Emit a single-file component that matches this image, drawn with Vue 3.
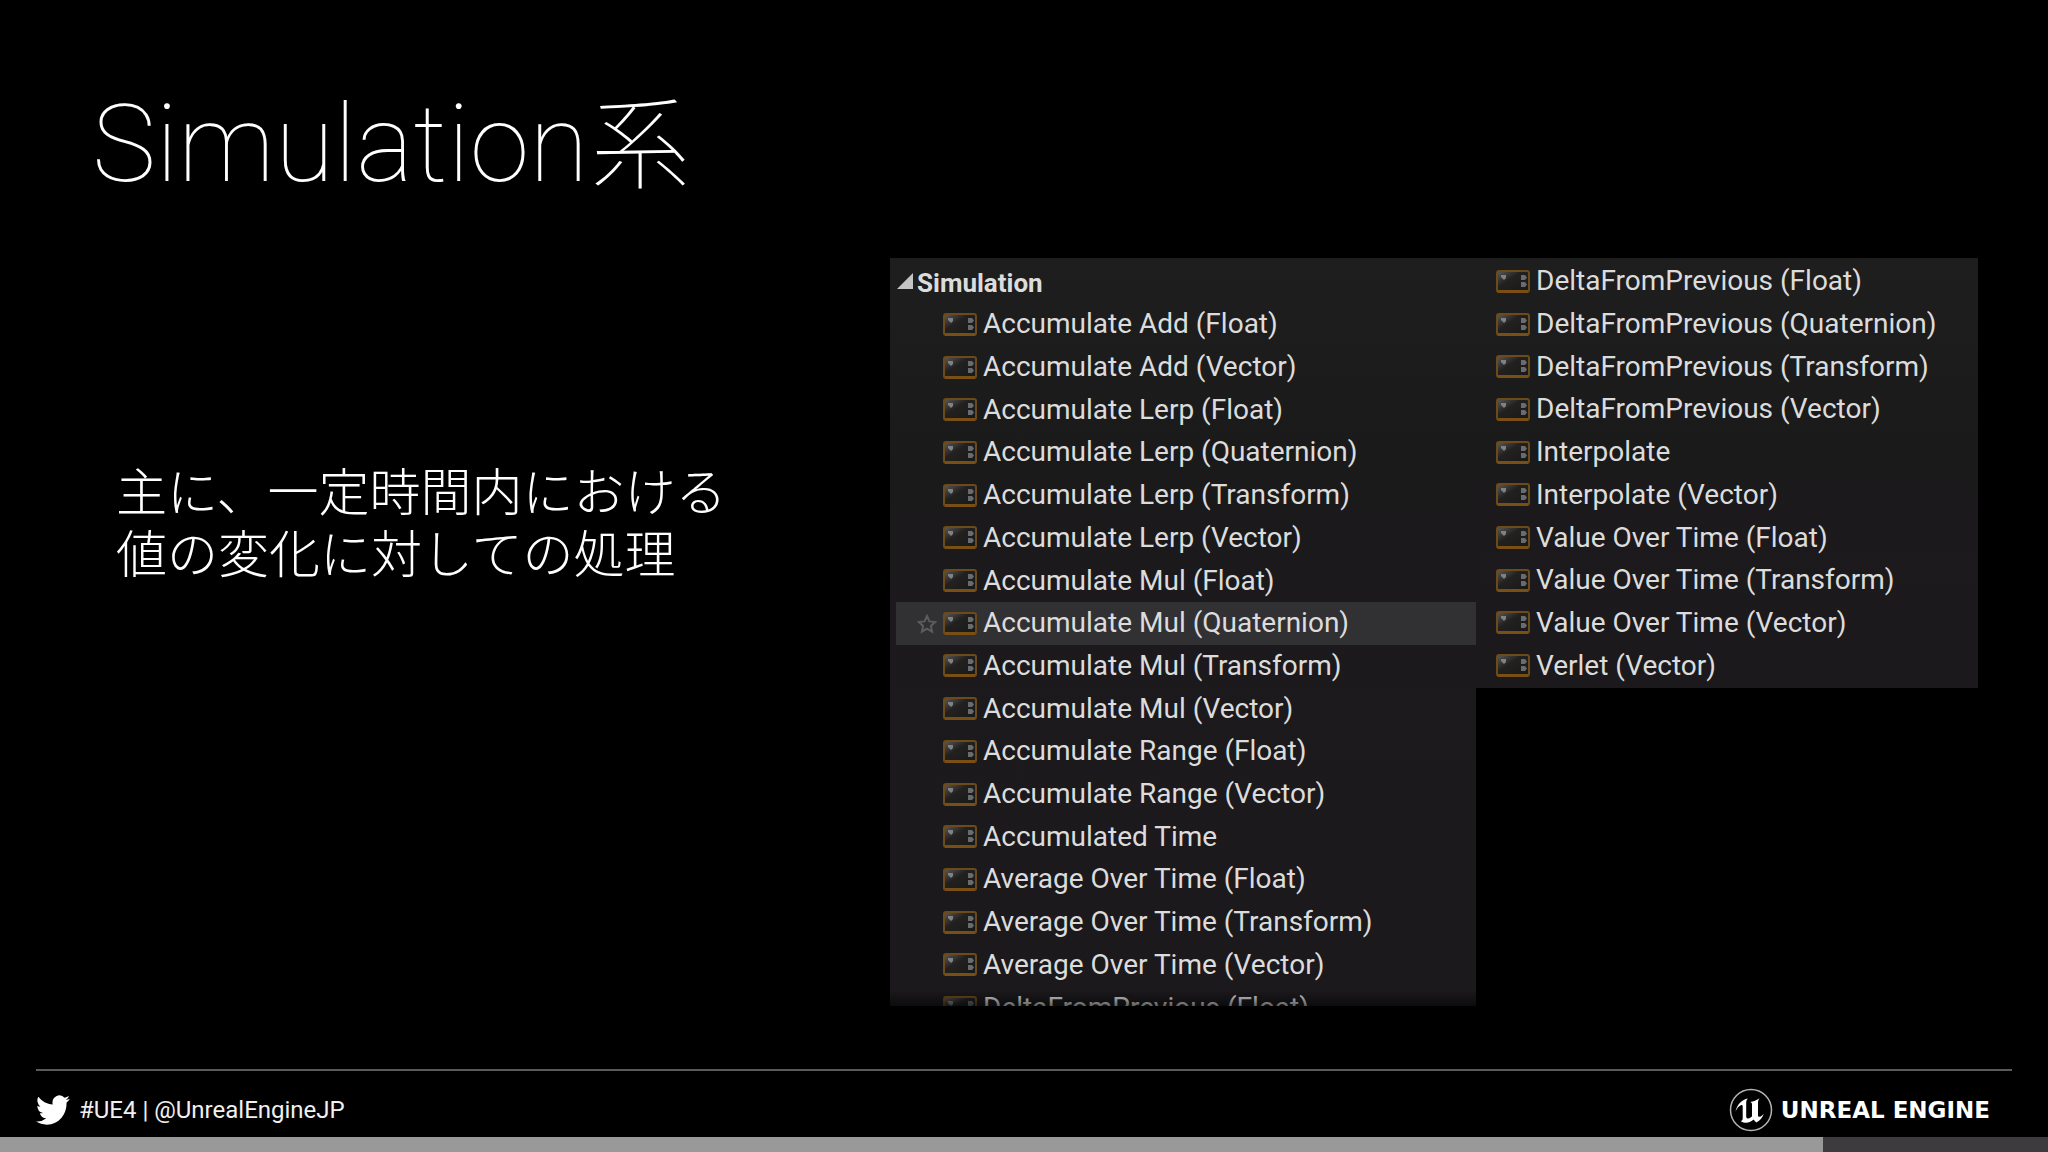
<script setup>
const leftNodes = [
  'Accumulate Add (Float)',
  'Accumulate Add (Vector)',
  'Accumulate Lerp (Float)',
  'Accumulate Lerp (Quaternion)',
  'Accumulate Lerp (Transform)',
  'Accumulate Lerp (Vector)',
  'Accumulate Mul (Float)',
  'Accumulate Mul (Quaternion)',
  'Accumulate Mul (Transform)',
  'Accumulate Mul (Vector)',
  'Accumulate Range (Float)',
  'Accumulate Range (Vector)',
  'Accumulated Time',
  'Average Over Time (Float)',
  'Average Over Time (Transform)',
  'Average Over Time (Vector)',
  'DeltaFromPrevious (Float)',
]
const rightNodes = [
  'DeltaFromPrevious (Float)',
  'DeltaFromPrevious (Quaternion)',
  'DeltaFromPrevious (Transform)',
  'DeltaFromPrevious (Vector)',
  'Interpolate',
  'Interpolate (Vector)',
  'Value Over Time (Float)',
  'Value Over Time (Transform)',
  'Value Over Time (Vector)',
  'Verlet (Vector)',
]
const columns = [
  { name: 'primary', heading: 'Simulation', nodes: leftNodes },
  { name: 'secondary', heading: '', nodes: rightNodes },
]
const selected = 'Accumulate Mul (Quaternion)'
const progress = 89
</script>

<template>
  <main class="slide">
    <svg width="0" height="0" class="defs" aria-hidden="true">
      <defs>
        <linearGradient id="nodeFill" x1="0" y1="0" x2="1" y2="1">
          <stop offset="0" stop-color="#5e5b57" />
          <stop offset="0.4" stop-color="#222120" />
          <stop offset="1" stop-color="#181818" />
        </linearGradient>
        <symbol id="node" viewBox="0 0 34 23">
          <rect x="1" y="1" width="32" height="21" rx="2" fill="url(#nodeFill)" stroke="#6b4a1c" stroke-width="2" />
          <path d="M2 21.500h30" stroke="#7a4f14" stroke-width="3" />
          <path d="M5 5h5v3l-2 2-3-3z" fill="#7c8288" />
          <path d="M25 5h4l2 2.500-2 2.500h-4zM25 12h4l2 2.500-2 2.500h-4z" fill="#686c71" />
        </symbol>
      </defs>
    </svg>

    <h1>Simulation<span class="kanji">系</span></h1>

    <section class="content">
      <p class="summary">主に、一定時間内における<br />値の変化に対しての処理</p>

      <div v-for="c in columns" :key="c.name" class="panel" :class="c.name">
        <h2 v-if="c.heading">
          <svg width="16" height="16" viewBox="0 0 16 16" aria-hidden="true"><path d="M16 0v16H0z" fill="#c4c4c4" /></svg>
          {{ c.heading }}
        </h2>
        <div class="clip">
          <ul>
            <li v-for="n in c.nodes" :key="n" :class="{ active: n === selected }">
              <svg v-if="n === selected" class="star" width="20" height="20" viewBox="0 0 20 20" aria-hidden="true">
                <path d="M10 2l2.400 5.400 5.800.6-4.300 3.900 1.200 5.800-5.100-3-5.100 3 1.200-5.800L1.800 8l5.800-.6z" fill="none" stroke="#5c5c5c" stroke-width="2" />
              </svg>
              <svg class="icon" width="34" height="23" aria-hidden="true"><use href="#node" /></svg>
              <span>{{ n }}</span>
            </li>
          </ul>
        </div>
      </div>
    </section>

    <footer>
      <div class="social">
        <svg width="34" height="30" viewBox="0 2 24 20" preserveAspectRatio="none" aria-hidden="true">
          <path fill="#fff" d="M23.950 4.570a10 10 0 0 1-2.820.77 4.960 4.960 0 0 0 2.160-2.720c-.95.55-2 .95-3.130 1.180a4.920 4.920 0 0 0-8.380 4.480C7.690 8.090 4.070 6.130 1.640 3.160a4.920 4.920 0 0 0 1.520 6.570 4.900 4.900 0 0 1-2.230-.61v.06a4.920 4.920 0 0 0 3.950 4.830 5 5 0 0 1-2.210.08 4.940 4.940 0 0 0 4.600 3.420A9.870 9.870 0 0 1 0 19.540a13.990 13.990 0 0 0 7.550 2.210c9.050 0 14-7.500 14-13.980 0-.21 0-.42-.02-.63a9.940 9.940 0 0 0 2.420-2.570z" />
        </svg>
        <span>#UE4 | @UnrealEngineJP</span>
      </div>
      <div class="brand">
        <svg width="44" height="44" viewBox="0 0 44 44" aria-hidden="true">
          <circle cx="22" cy="22" r="20.500" fill="none" stroke="#b4b4b4" stroke-width="1.500" />
          <path fill="#fff" d="M6.500 23.500C8 16.500 13 11.500 19 10.500c-1.500 1.500-1.800 2.500-1.800 4.500v13.500c0 1.500 1.300 2.200 2.500 2 1.300-.3 2.500-1.200 3.300-2.200V16.500c0-1.500-.6-2.300-2-2.500 3.500-.5 6.800-1.800 9.500-3.800-1.300 2-1.500 3-1.500 5v12.300c0 1.300 1.200 1.600 2.200 1.200 1.400-.7 2.600-1.700 3.600-2.900-1.300 4-4 7.200-7.600 8.700L24.500 31.500c-2 2-5 3.600-8.600 3.200-1.500-.2-3-.7-4.200-1.700 1.400-.3 2-1.200 2-2.800V18.500c0-1.200-.5-1.800-1.500-1.500-2.200.8-4.200 3.300-5.700 6.500z" />
        </svg>
        <strong>UNREAL ENGINE</strong>
      </div>
    </footer>

    <div class="track" role="progressbar" :aria-valuenow="progress" aria-label="Slide progress">
      <div class="fill" :style="{ width: progress + '%' }"></div>
    </div>
  </main>
</template>

<style>
body {
  background: #000;
}
</style>

<style scoped>
.slide {
  display: flex;
  flex-direction: column;
  min-height: 100vh;
  background: #000;
  color: #fff;
  font-family: Roboto, "Noto Sans CJK JP", sans-serif;
}
.defs {
  position: absolute;
}
h1 {
  margin: 0;
  padding: 84px 92px 54px;
  font-size: 108px;
  font-weight: 100;
  line-height: 120px;
}
.kanji {
  margin-left: 2px;
  font-family: "Noto Sans CJK JP", sans-serif;
  font-size: 100px;
  line-height: 100px;
}
.content {
  display: grid;
  grid-template-columns: 890fr 586fr 502fr 70fr;
  align-items: start;
  flex: 1;
}
.summary {
  margin: 0;
  padding: 200px 0 0 116px;
  font-family: "Noto Sans CJK JP", sans-serif;
  font-size: 51px;
  font-weight: 300;
  line-height: 62px;
  white-space: nowrap;
}
.panel {
  background: linear-gradient(#1e1e1e, #1b1a1b 200px, #1b191c);
  color: #dcdcdc;
}
h2 {
  display: flex;
  gap: 4px;
  margin: 0;
  padding: 5px 7px 0;
  font-size: 26px;
  font-weight: 700;
  line-height: 40px;
}
h2 svg {
  margin-top: 10px;
}
.clip {
  position: relative;
  overflow: hidden;
}
.primary .clip {
  height: 703px;
}
.primary .clip::after {
  content: "";
  position: absolute;
  inset: auto 0 0;
  height: 16px;
  background: linear-gradient(transparent, #00000090);
}
ul {
  display: flex;
  flex-direction: column;
  margin: 0;
  padding: 0;
  list-style: none;
}
.primary ul {
  height: 726px;
  padding-left: 6px;
}
.secondary ul {
  height: 427px;
  padding: 2px 0 1px;
}
li {
  display: flex;
  flex: 1;
  align-items: center;
  gap: 6px;
  position: relative;
  font-size: 28px;
  line-height: 42px;
  white-space: nowrap;
}
.primary li {
  padding-left: 47px;
}
.secondary li {
  padding-left: 20px;
}
.active {
  background: #313032;
}
.icon {
  flex: none;
}
.star {
  position: absolute;
  left: 21px;
  top: 12px;
}
footer {
  display: flex;
  justify-content: space-between;
  align-items: center;
  margin: 0 36px;
  padding: 15px 22px 3px 0;
  border-top: 2px solid #5a5a5a;
}
.social,
.brand {
  display: flex;
  align-items: center;
  line-height: 48px;
}
.social {
  gap: 9px;
  font-size: 24px;
  color: #f0f0f0;
}
.brand {
  gap: 8px;
}
.brand strong {
  font-family: "DejaVu Sans", sans-serif;
  font-size: 23px;
  font-weight: 700;
}
.track {
  height: 15px;
  background: #3d3b3d;
}
.fill {
  height: 100%;
  background: #999;
}
</style>
